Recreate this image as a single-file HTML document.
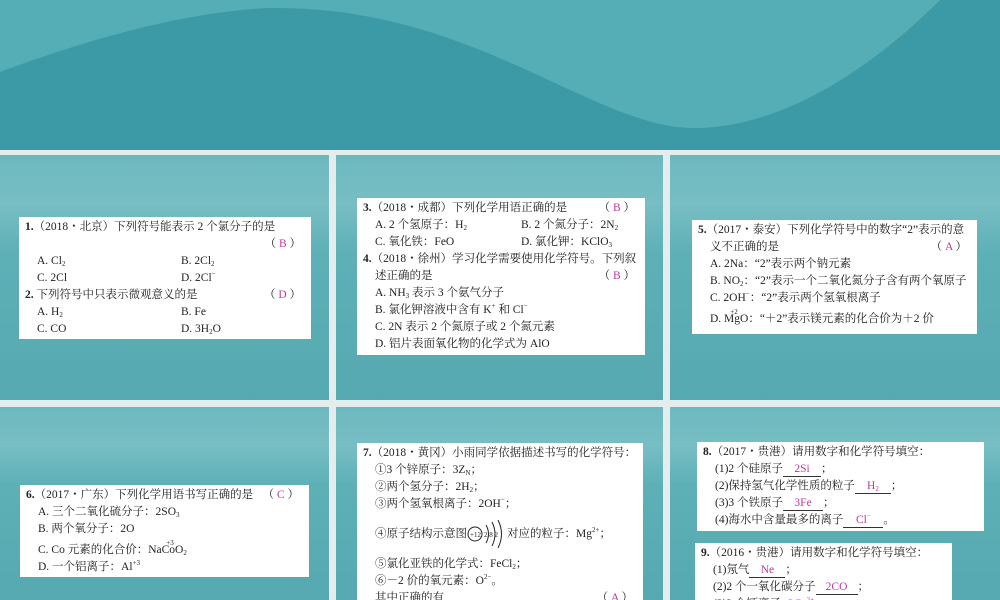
<!DOCTYPE html>
<html><head><meta charset="utf-8">
<style>
*{margin:0;padding:0;box-sizing:border-box}
html{width:1000px;height:600px;overflow:hidden}
body{width:1000px;height:600px;overflow:hidden;background:#e4eded;position:relative;font-family:"Liberation Serif","Noto Serif CJK SC","Noto Sans CJK SC",serif;color:#222}
.banner{position:absolute;left:0;top:0;width:1000px;height:150px}
.p{position:absolute;background:linear-gradient(180deg,#6db8bf 0%,#78bec4 20%,#5eb0b7 40%,#57a9b1 100%);overflow:hidden}
.box{position:absolute;background:#fff;font-size:11.5px;line-height:17px;padding:2px 6px;white-space:nowrap;overflow:hidden}
.box div{position:relative}
.i{padding-left:12px}
.ans{color:#c2379c}
.r{position:absolute;right:4px}
sub{font-size:7px;vertical-align:-2px;line-height:0}
sup{font-size:7px;vertical-align:5px;line-height:0}
b{font-weight:bold}
.u{display:inline-block;border-bottom:1px solid #333;text-align:center;color:#c2379c;line-height:13px}
</style></head><body>
<svg class="banner" viewBox="0 0 1000 150" preserveAspectRatio="none">
<rect width="1000" height="150" fill="#3b9aa6"/>
<path d="M0 0 H940 C900 40 800 130 690 128 C590 125 470 5 270 8 C170 12 60 50 0 72 Z" fill="#55aeb6"/>
</svg>
<div class="p" style="left:0;top:155px;width:329px;height:245px"></div>
<div class="p" style="left:336px;top:155px;width:327px;height:245px"></div>
<div class="p" style="left:670px;top:155px;width:330px;height:245px"></div>
<div class="p" style="left:0;top:407px;width:329px;height:193px"></div>
<div class="p" style="left:336px;top:407px;width:327px;height:193px"></div>
<div class="p" style="left:670px;top:407px;width:330px;height:193px"></div>

<div class="box" style="left:19px;top:217px;width:292px;height:122px">
<div><b>1.</b>（2018・北京）下列符号能表示 2 个氯分子的是</div>
<div style="height:17px"><span class="r">（ <span class="ans">B</span> ）</span></div>
<div class="i">A. Cl<sub>2</sub><span style="position:absolute;left:156px">B. 2Cl<sub>2</sub></span></div>
<div class="i">C. 2Cl<span style="position:absolute;left:156px">D. 2Cl<sup>−</sup></span></div>
<div><b>2.</b> 下列符号中只表示微观意义的是<span class="r">（ <span class="ans">D</span> ）</span></div>
<div class="i">A. H<sub>2</sub><span style="position:absolute;left:156px">B. Fe</span></div>
<div class="i">C. CO<span style="position:absolute;left:156px">D. 3H<sub>2</sub>O</span></div>
</div>

<div class="box" style="left:357px;top:198px;width:288px;height:157px">
<div><b>3.</b>（2018・成都）下列化学用语正确的是<span class="r">（ <span class="ans">B</span> ）</span></div>
<div class="i">A. 2 个氢原子：H<sub>2</sub><span style="position:absolute;left:158px">B. 2 个氮分子：2N<sub>2</sub></span></div>
<div class="i">C. 氧化铁：FeO<span style="position:absolute;left:158px">D. 氯化钾：KClO<sub>3</sub></span></div>
<div><b>4.</b>（2018・徐州）学习化学需要使用化学符号。下列叙</div>
<div class="i">述正确的是<span class="r">（ <span class="ans">B</span> ）</span></div>
<div class="i">A. NH<sub>3</sub> 表示 3 个氨气分子</div>
<div class="i">B. 氯化钾溶液中含有 K<sup>+</sup> 和 Cl<sup>−</sup></div>
<div class="i">C. 2N 表示 2 个氮原子或 2 个氮元素</div>
<div class="i">D. 铝片表面氧化物的化学式为 AlO</div>
</div>

<div class="box" style="left:692px;top:220px;width:285px;height:114px">
<div><b>5.</b>（2017・泰安）下列化学符号中的数字“2”表示的意</div>
<div class="i">义不正确的是<span class="r">（ <span class="ans">A</span> ）</span></div>
<div class="i">A. 2Na：“2”表示两个钠元素</div>
<div class="i">B. NO<sub>2</sub>：“2”表示一个二氧化氮分子含有两个氧原子</div>
<div class="i">C. 2OH<sup>−</sup>：“2”表示两个氢氧根离子</div>
<div class="i" style="margin-top:4px">D. M<span style="position:relative">g<span style="position:absolute;left:-4px;top:-9px;font-size:7px">+2</span></span>O：“＋2”表示镁元素的化合价为＋2 价</div>
</div>

<div class="box" style="left:20px;top:485px;width:289px;height:92px">
<div><b>6.</b>（2017・广东）下列化学用语书写正确的是<span class="r">（ <span class="ans">C</span> ）</span></div>
<div class="i">A. 三个二氧化硫分子：2SO<sub>3</sub></div>
<div class="i">B. 两个氧分子：2O</div>
<div class="i" style="margin-top:4px">C. Co 元素的化合价：NaC<span style="position:relative">o<span style="position:absolute;left:-3px;top:-9px;font-size:7px">+3</span></span>O<sub>2</sub></div>
<div class="i">D. 一个铝离子：Al<sup>+3</sup></div>
</div>

<div class="box" style="left:357px;top:443px;width:286px;height:157px">
<div><b>7.</b>（2018・黄冈）小雨同学依据描述书写的化学符号：</div>
<div class="i">①3 个锌原子：3Z<sub>N</sub>；</div>
<div class="i">②两个氢分子：2H<sub>2</sub>；</div>
<div class="i">③两个氢氧根离子：2OH<sup>−</sup>；</div>
<div class="i" style="margin-top:13px">④原子结构示意图<svg width="40" height="30" viewBox="0 0 40 30" style="vertical-align:middle;margin:-8px 0"><circle cx="8" cy="15" r="7" fill="none" stroke="#222" stroke-width="1"/><text x="3" y="18" font-size="7" fill="#222">+12</text><path d="M19 6 Q24 15 19 24 M25 3 Q31 15 25 27 M31 1 Q38 15 31 29" fill="none" stroke="#222"/><text x="17" y="18" font-size="7" fill="#222">2 8 2</text></svg>对应的粒子：Mg<sup>2+</sup>；</div>
<div class="i" style="margin-top:13px">⑤氯化亚铁的化学式：FeCl<sub>2</sub>；</div>
<div class="i">⑥－2 价的氧元素：O<sup>2−</sup>。</div>
<div class="i">其中正确的有<span class="r">（ <span class="ans">A</span> ）</span></div>
</div>

<div class="box" style="left:697px;top:442px;width:287px;height:89px">
<div><b>8.</b>（2017・贵港）请用数字和化学符号填空：</div>
<div class="i">(1)2 个硅原子<span class="u" style="width:38px">2Si</span>；</div>
<div class="i">(2)保持氢气化学性质的粒子<span class="u" style="width:36px">H<sub>2</sub></span>；</div>
<div class="i">(3)3 个铁原子<span class="u" style="width:40px">3Fe</span>；</div>
<div class="i">(4)海水中含量最多的离子<span class="u" style="width:40px">Cl<sup>−</sup></span>。</div>
</div>

<div class="box" style="left:695px;top:543px;width:257px;height:57px">
<div><b>9.</b>（2016・贵港）请用数字和化学符号填空：</div>
<div class="i">(1)氖气<span class="u" style="width:36px">Ne</span>；</div>
<div class="i">(2)2 个一氧化碳分子<span class="u" style="width:42px">2CO</span>；</div>
<div class="i">(3)3 个钙离子<span class="u" style="width:40px">3Ca<sup>2+</sup></span>；</div>
</div>
</body></html>
